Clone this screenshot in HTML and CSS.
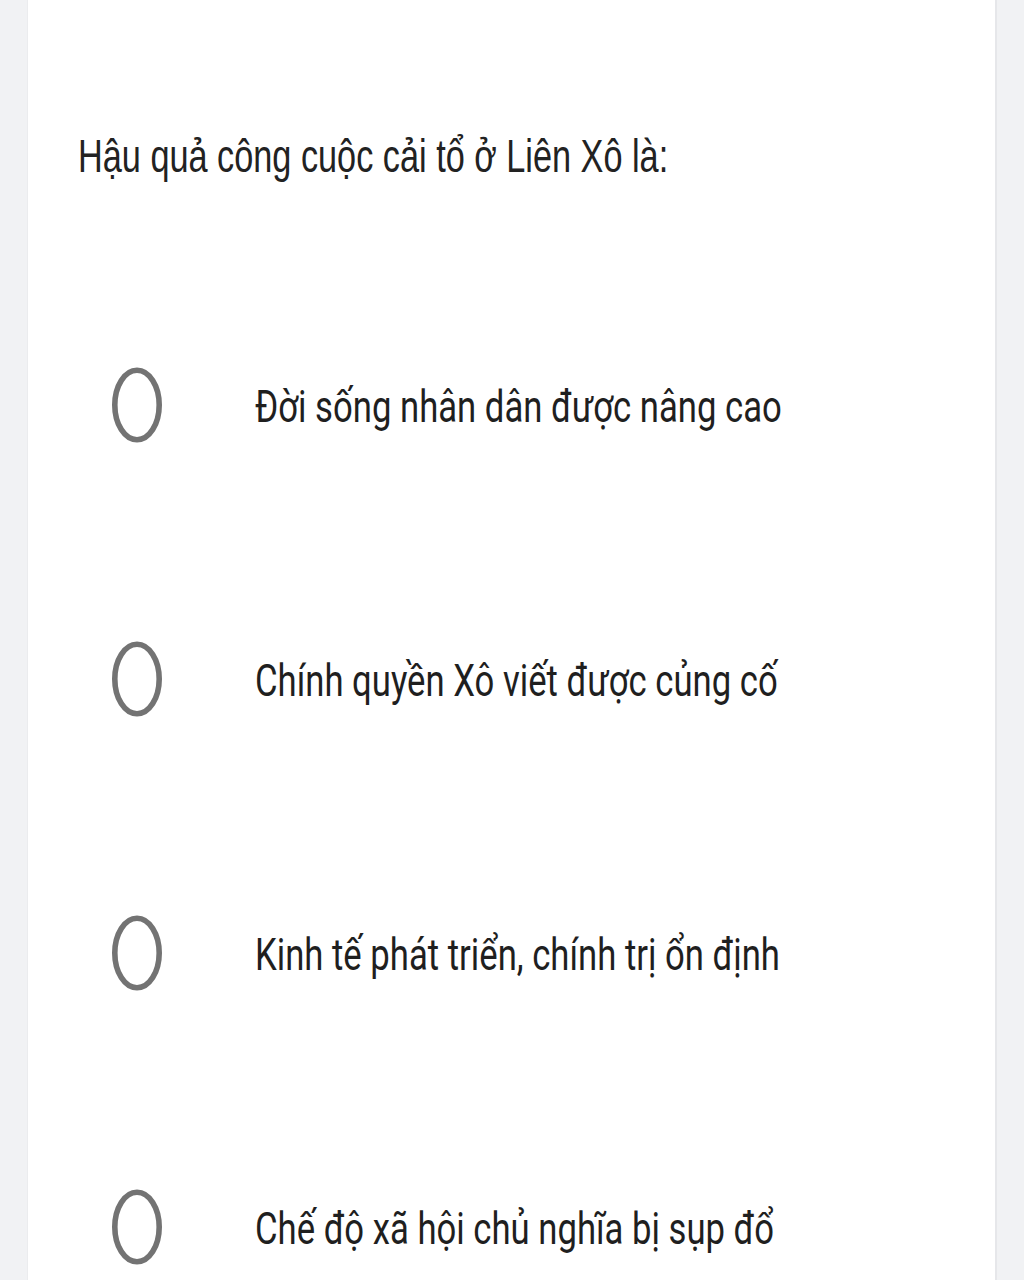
FILE: index.html
```html
<!DOCTYPE html>
<html lang="vi">
<head>
<meta charset="utf-8">
<title>Câu hỏi</title>
<link rel="stylesheet" href="styles.css">
</head>
<body>
<div class="page">
  <main class="card">
    <div class="question"><span class="question-text">Hậu quả công cuộc cải tổ ở Liên Xô là:</span></div>
    <ul class="options">
      <li class="option">
        <svg class="radio" width="50" height="76" viewBox="0 0 50 76"><ellipse cx="25" cy="38" rx="22.2" ry="34.8" fill="none" stroke="#737373" stroke-width="5.6"/></svg>
        <span class="option-text">Đời sống nhân dân được nâng cao</span>
      </li>
      <li class="option">
        <svg class="radio" width="50" height="76" viewBox="0 0 50 76"><ellipse cx="25" cy="38" rx="22.2" ry="34.8" fill="none" stroke="#737373" stroke-width="5.6"/></svg>
        <span class="option-text">Chính quyền Xô viết được củng cố</span>
      </li>
      <li class="option">
        <svg class="radio" width="50" height="76" viewBox="0 0 50 76"><ellipse cx="25" cy="38" rx="22.2" ry="34.8" fill="none" stroke="#737373" stroke-width="5.6"/></svg>
        <span class="option-text">Kinh tế phát triển, chính trị ổn định</span>
      </li>
      <li class="option">
        <svg class="radio" width="50" height="76" viewBox="0 0 50 76"><ellipse cx="25" cy="38" rx="22.2" ry="34.8" fill="none" stroke="#737373" stroke-width="5.6"/></svg>
        <span class="option-text">Chế độ xã hội chủ nghĩa bị sụp đổ</span>
      </li>
    </ul>
  </main>
</div>
</body>
</html>
```

FILE: styles.css
```css
html, body {
  margin: 0;
  padding: 0;
}

body {
  background: #f1f2f4;
  font-family: "Liberation Sans", Arial, sans-serif;
  color: #202124;
  overflow: hidden;
}

.page {
  height: 1280px;
  padding: 0 27px 0 27px;
  box-sizing: border-box;
}

.card {
  height: 100%;
  background: #ffffff;
  border-left: 1px solid #ebecee;
  border-right: 2px solid #e6e7ea;
  box-sizing: border-box;
  padding: 126px 0 0 0;
}

.question {
  padding-left: 50px;
  font-size: 46px;
  line-height: 60px;
  white-space: nowrap;
}

.question-text {
  display: inline-block;
  transform: scaleX(0.745);
  transform-origin: left center;
  color: #222222;
}

.options {
  list-style: none;
  margin: 181px 0 0 0;
  padding: 0 0 0 84px;
  display: flex;
  flex-direction: column;
  gap: 198px;
}

.option {
  display: flex;
  align-items: center;
  height: 76px;
}

.radio {
  flex: none;
  display: block;
}

.option-text {
  display: inline-block;
  margin-left: 93px;
  padding-top: 4px;
  font-family: Roboto, "Liberation Sans", sans-serif;
  font-size: 44px;
  line-height: 60px;
  white-space: nowrap;
  transform: scaleX(0.788);
  transform-origin: left center;
  color: #1f1f1f;
}
```
